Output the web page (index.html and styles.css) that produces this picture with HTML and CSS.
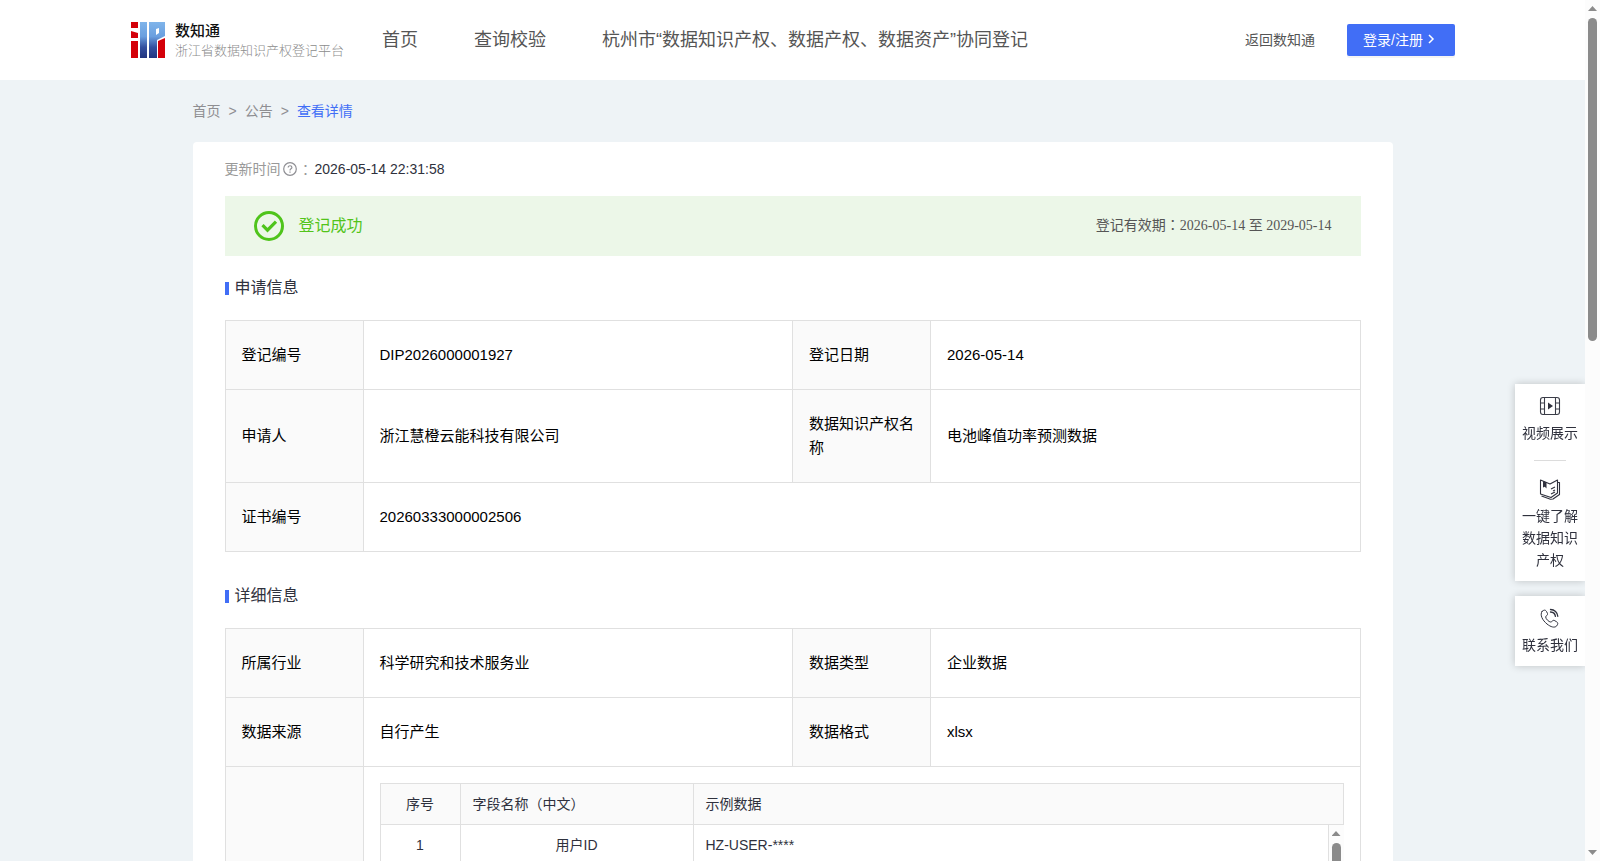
FILE: index.html
```html
<!DOCTYPE html>
<html lang="zh-CN">
<head>
    <meta charset="UTF-8">
    <meta name="viewport" content="width=device-width, initial-scale=1.0">
    <title>数知通 - 查看详情</title>
    <link rel="stylesheet" href="styles.css">
</head>
<body>
    <div class="page">
        <header class="header">
            <a class="logo" href="#">
                <svg class="logo-mark" viewBox="0 0 34 36" width="34" height="36">
                    <defs>
                        <linearGradient id="blue" x1="0" y1="0" x2="0" y2="1">
                            <stop offset="0" stop-color="#7fb4ea"/>
                            <stop offset="0.4" stop-color="#6a9fdf"/>
                            <stop offset="0.7" stop-color="#34509f"/>
                            <stop offset="1" stop-color="#22357f"/>
                        </linearGradient>
                    </defs>
                    <path fill="#d40009" d="M0 0h7v6H0zM0 9l7 2v5H0zM0 19h7v17H0zM27 19l7-3v20h-7z"/>
                    <path fill="url(#blue)" d="M9 0h7v36H9zM18 0h16v14l-8 4v18h-8zM25 7v6l3-2V6z" fill-rule="evenodd"/>
                </svg>
                <span class="logo-text">
                    <strong>数知通</strong>
                    <small>浙江省数据知识产权登记平台</small>
                </span>
            </a>
            <nav class="nav">
                <a href="#">首页</a>
                <a href="#">查询校验</a>
                <a href="#">杭州市“数据知识产权、数据产权、数据资产”协同登记</a>
            </nav>
            <div class="header-right">
                <a class="back" href="#">返回数知通</a>
                <button class="login" type="button">登录/注册
                    <svg viewBox="0 0 12 12" width="12" height="12"><path d="M4 1l4 4-4 4" fill="none" stroke="#fff" stroke-width="1.5"/></svg>
                </button>
            </div>
        </header>

        <main class="main">
            <nav class="breadcrumb">
                <a href="#">首页</a>
                <span>&gt;</span>
                <a href="#">公告</a>
                <span>&gt;</span>
                <a class="current" href="#">查看详情</a>
            </nav>

            <div class="card">
                <div class="update">
                    <span class="update-label">更新时间</span>
                    <svg class="help" viewBox="0 0 14 14" width="14" height="14" fill="none" stroke="#8f8f94">
                        <circle cx="7" cy="7" r="6.3" stroke-width="1.2"/>
                        <path d="M5.2 5.5c0-2.4 3.7-2.3 3.7 0C8.9 6.8 7 6.9 7 8.4M7 9.5v1.200" stroke-width="1.2"/>
                    </svg>
                    <span class="update-label colon" lang="zh-TW">：</span>
                    <span class="update-time">2026-05-14 22:31:58</span>
                </div>

                <div class="banner">
                    <svg viewBox="0 0 30 30" width="30" height="30" fill="none" stroke="#4fc41b">
                        <circle cx="15" cy="15" r="13.5" stroke-width="3"/>
                        <path d="M8.500 14.200l5 5 8.500-8.500" stroke-width="3.2"/>
                    </svg>
                    <span class="banner-status">登记成功</span>
                    <span class="banner-date">登记有效期<span class="colon" lang="zh-TW">：</span>2026-05-14 至 2029-05-14</span>
                </div>

                <h2 class="section-title">申请信息</h2>
                <table class="info">
                    <colgroup><col class="col-label"><col><col class="col-label"><col></colgroup>
                    <tr>
                        <th scope="row">登记编号</th>
                        <td>DIP2026000001927</td>
                        <th scope="row">登记日期</th>
                        <td>2026-05-14</td>
                    </tr>
                    <tr>
                        <th scope="row">申请人</th>
                        <td>浙江慧橙云能科技有限公司</td>
                        <th scope="row">数据知识产权名称</th>
                        <td>电池峰值功率预测数据</td>
                    </tr>
                    <tr>
                        <th scope="row">证书编号</th>
                        <td colspan="3">20260333000002506</td>
                    </tr>
                </table>

                <h2 class="section-title">详细信息</h2>
                <table class="info">
                    <colgroup><col class="col-label"><col><col class="col-label"><col></colgroup>
                    <tr>
                        <th scope="row">所属行业</th>
                        <td>科学研究和技术服务业</td>
                        <th scope="row">数据类型</th>
                        <td>企业数据</td>
                    </tr>
                    <tr>
                        <th scope="row">数据来源</th>
                        <td>自行产生</td>
                        <th scope="row">数据格式</th>
                        <td>xlsx</td>
                    </tr>
                    <tr>
                        <th scope="row"></th>
                        <td class="fields-cell" colspan="3">
                            <table class="fields">
                                <colgroup><col class="col-no"><col class="col-name"><col></colgroup>
                                <tr>
                                    <th class="center" scope="col">序号</th>
                                    <th scope="col">字段名称（中文）</th>
                                    <th scope="col">示例数据</th>
                                </tr>
                            </table>
                            <div class="fields-scroll">
                                <table class="fields fields-body">
                                    <colgroup><col class="col-no"><col class="col-name"><col></colgroup>
                                    <tr>
                                        <td class="center">1</td>
                                        <td class="center">用户ID</td>
                                        <td>HZ-USER-****</td>
                                    </tr>
                                    <tr class="rest"><td></td><td></td><td></td></tr>
                                </table>
                                <div class="scrollbar">
                                    <span class="arrow-up"></span>
                                    <span class="thumb"></span>
                                    <span class="arrow-down"></span>
                                </div>
                            </div>
                        </td>
                    </tr>
                </table>
            </div>
        </main>
    </div>

    <div class="scrollbar">
        <span class="arrow-up"></span>
        <span class="thumb"></span>
        <span class="arrow-down"></span>
    </div>

    <!-- Floating shortcuts -->
    <aside class="side">
        <div class="side-panel">
            <a href="#">
                <svg viewBox="0 0 22 22" width="22" height="22" fill="none" stroke="#3b3d48" stroke-width="1.1">
                    <rect x="1.500" y="1.500" width="19" height="17" rx="2.500"/>
                    <path d="M5.500 1.500v17M16.500 1.500v17M1.500 7h4M1.500 13h4M16.500 7h4M16.500 13h4"/>
                    <path d="M9 6.500l5 3.500-5 3.500z" fill="#2f313d" stroke="none"/>
                </svg>
                视频展示
            </a>
            <hr>
            <a href="#">
                <svg viewBox="0 0 22 22" width="22" height="22" fill="none" stroke="#2f313d" stroke-width="1.1" stroke-linejoin="round">
                    <path d="M1.500 1l9.500 4 7.500-4v13l-6.500 4.500L1.500 15z"/>
                    <path d="M18.500 3.500h2v12L14 20l-2.500.3L2.500 17M12 10l4-2M12 15l4-2"/>
                    <path d="M14 12l2-1"/>
                    <path d="M4 2l3.500 1.500v6L5.800 7.800 4 8.500z" fill="#2f313d" stroke="none"/>
                </svg>
                一键了解数据知识产权
            </a>
        </div>
        <div class="side-panel">
            <a href="#">
                <svg viewBox="0 0 22 22" width="22" height="22" fill="none" stroke="#2f313d" stroke-width="1" stroke-linejoin="round" stroke-linecap="round">
                    <path d="M3 3.500C5 1.500 6.500 1.800 7.500 3.500l1 2c.7 1.500-1.800 2.200-1.800 3.500 0 2 3.300 5 5 5 1.400 0 2-2.300 3.500-1.600l2.300 1.300c1.600 1 1.700 2.300.2 4.200-2 2.300-6 1.100-9.700-1.900C3.500 12.300.5 6.800 3 3.500z"/>
                    <path d="M11.500 1.500c4 .1 7 3 7.300 6.800M11.500 4c2.700.1 4.600 2 4.900 4.400" stroke-width="1.300"/>
                </svg>
                联系我们
            </a>
        </div>
    </aside>
</body>
</html>
```
FILE: styles.css
```css
* {
    box-sizing: border-box;
}
body {
    display: flex;
    height: 100vh;
    margin: 0;
    overflow: hidden;
    background-color: #eef3f6;
    color: #2f313d;
    font-family: "Liberation Sans", "Noto Sans CJK SC", sans-serif;
    font-size: 14px;
    line-height: 22px;
}
a {
    color: inherit;
    text-decoration: none;
}
.page {
    flex: 1;
    min-width: 0;
    overflow: hidden;
}

/* Scrollbars */
.scrollbar {
    display: flex;
    flex-direction: column;
    align-items: center;
    width: 15px;
    padding: 6px 0;
    background-color: #fcfcfc;
}
.arrow-up,
.arrow-down {
    width: 9px;
    height: 5px;
    background-color: #8b8b8b;
    clip-path: polygon(50% 0, 100% 100%, 0 100%);
}
.arrow-down {
    margin-top: auto;
    clip-path: polygon(0 0, 100% 0, 50% 100%);
}
.thumb {
    width: 9px;
    height: 38%;
    margin-top: 7px;
    border-radius: 5px;
    background-color: #8b8b8b;
}

/* Header */
.header {
    display: flex;
    align-items: center;
    height: 80px;
    padding: 0 130px;
    background-color: #fff;
}
.logo {
    display: flex;
    align-items: center;
    gap: 10px;
    margin-left: 1px;
}
.logo-text {
    display: flex;
    flex-direction: column;
    font-family: "Noto Sans CJK SC", sans-serif;
}
.logo-text strong {
    color: #111;
    font-size: 15px;
    font-weight: 500;
    line-height: 20px;
}
.logo-text small {
    color: #8c8c8c;
    font-size: 13px;
    font-weight: 300;
    line-height: 20px;
}
.nav {
    display: flex;
    gap: 56px;
    margin-left: 38px;
    color: #555;
    font-size: 18px;
    line-height: 24px;
}
.header-right {
    display: flex;
    align-items: center;
    gap: 32px;
    margin-left: auto;
    color: #555;
}
.login {
    display: flex;
    align-items: center;
    gap: 2px;
    width: 108px;
    height: 32px;
    padding: 0 16px;
    border: none;
    border-radius: 2px;
    background-color: #416ef6;
    box-shadow: 0 2px 0 rgba(0, 0, 0, 0.045);
    color: #fff;
    font: inherit;
    white-space: nowrap;
}

/* Content */
.main {
    max-width: 1200px;
    margin: 0 auto;
}
.breadcrumb {
    display: flex;
    gap: 8px;
    padding: 20px 0;
    color: #8e8e92;
}
.breadcrumb .current {
    color: #416ef6;
}
.card {
    padding: 0 32px 32px;
    border-radius: 4px;
    background-color: #fff;
}
.update {
    display: flex;
    align-items: center;
    padding: 16px 0;
}
.update-label {
    color: #999;
}
.colon {
    font-family: "Noto Sans CJK TC", sans-serif;
    line-height: 1;
}
.help {
    margin: 0 2px;
}
.update-time {
    margin-left: 2px;
}
.banner {
    display: flex;
    align-items: center;
    gap: 15px;
    height: 60px;
    padding: 0 29px;
    background-color: #ecf7e8;
}
.banner-status {
    color: #52c41a;
    font-size: 16px;
}
.banner-date {
    margin-left: auto;
    color: #555;
    font-family: "Liberation Serif", "Noto Sans CJK SC", serif;
}
.section-title {
    display: flex;
    align-items: center;
    gap: 6px;
    margin: 0;
    padding: 20px 0;
    font-size: 16px;
    font-weight: 400;
    line-height: 24px;
}
.section-title::before {
    content: "";
    width: 4px;
    height: 13px;
    background-color: #416ef6;
}

/* Tables */
.info,
.fields {
    width: 100%;
    border-collapse: collapse;
    table-layout: fixed;
}
.info {
    margin-bottom: 12px;
    color: #000;
    font-size: 15px;
    line-height: 24px;
}
.info th,
.info td {
    padding: 22px 16px;
    border: 1px solid #e0e0e0;
    font-weight: 400;
    text-align: left;
}
.info th {
    background-color: #fafafa;
}
.col-label {
    width: 138px;
}
.info .fields-cell {
    padding: 16px;
}
.fields {
    color: #2f313d;
    font-size: 14px;
    line-height: 22px;
}
.info .fields th,
.info .fields td {
    height: 41px;
    padding: 9px 12px;
}
.info .fields .center {
    text-align: center;
}
.info .fields-body td {
    border-top: none;
}
.col-no {
    width: 80px;
}
.col-name {
    width: 233px;
}
.fields-scroll {
    display: flex;
    height: 420px;
    overflow: hidden;
}
.fields-body {
    flex: 1;
}
.fields .rest {
    height: 380px;
}

/* Floating shortcuts */
.side {
    position: fixed;
    top: 384px;
    right: 15px;
    display: flex;
    flex-direction: column;
    gap: 15px;
    width: 70px;
    clip-path: inset(-10px 0 -10px -10px);
}
.side-panel {
    padding: 12px 7px 10px;
    background-color: #fff;
    box-shadow: 0 0 8px rgba(0, 0, 0, 0.2);
    text-align: center;
}
.side-panel a,
.side-panel svg {
    display: block;
}
.side-panel svg {
    margin: 0 auto 4px;
}
.side-panel hr {
    width: 32px;
    margin: 16px auto 18px;
    border: none;
    border-top: 1px solid #dcdcdc;
}
```
